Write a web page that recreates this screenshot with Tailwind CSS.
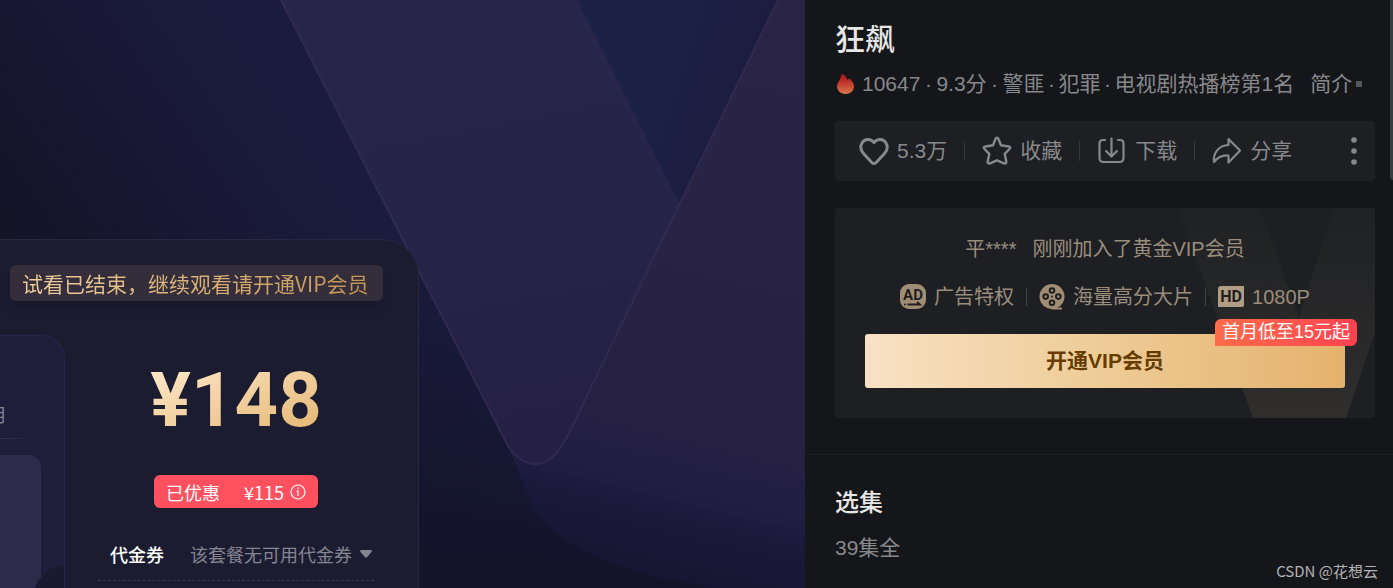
<!DOCTYPE html>
<html lang="zh-CN">
<head>
  <meta charset="UTF-8" />
  <meta name="viewport" content="width=device-width, initial-scale=1.0" />
  <title>狂飙</title>
  <script src="https://cdn.jsdelivr.net/npm/@tailwindcss/browser@4"></script>
</head>
<body class="bg-[#15161a] font-['Liberation_Sans','Noto_Sans_CJK_SC',sans-serif]">
  <div class="relative flex min-h-screen overflow-hidden">

    <!-- player area -->
    <main class="relative flex flex-1 flex-col overflow-hidden bg-[#17183a] font-['Noto_Sans_CJK_SC',sans-serif]">
      <svg class="absolute inset-0 h-full w-full" viewBox="0 0 805 588" preserveAspectRatio="xMaxYMin slice" aria-hidden="true">
        <defs>
          <linearGradient id="base" gradientUnits="userSpaceOnUse" x1="0" y1="240" x2="260" y2="60">
            <stop offset="0" stop-color="#131425" />
            <stop offset=".45" stop-color="#171733" />
            <stop offset="1" stop-color="#1b1b3d" />
          </linearGradient>
          <linearGradient id="low" x1="0" y1="0" x2="0" y2="1">
            <stop offset=".4" stop-color="#131530" stop-opacity="0" />
            <stop offset="1" stop-color="#131429" />
          </linearGradient>
          <linearGradient id="arm" x1="0" y1="0" x2=".2" y2="1">
            <stop offset="0" stop-color="#29254a" />
            <stop offset=".6" stop-color="#252448" />
            <stop offset="1" stop-color="#251f43" />
          </linearGradient>
          <linearGradient id="notch" x1="0" y1="0" x2="1" y2=".35">
            <stop offset=".45" stop-color="#1c2147" />
            <stop offset="1" stop-color="#1c1b3d" />
          </linearGradient>
          <linearGradient id="side" gradientUnits="userSpaceOnUse" x1="770" y1="30" x2="640" y2="570">
            <stop offset="0" stop-color="#2a2445" />
            <stop offset=".75" stop-color="#262043" />
            <stop offset=".84" stop-color="#211e43" />
            <stop offset=".9" stop-color="#1b193a" />
            <stop offset="1" stop-color="#161632" />
          </linearGradient>
        </defs>
        <rect width="805" height="588" fill="url(#base)" />
        <rect width="805" height="588" fill="url(#low)" />
        <path d="M778 0H805V588H720C620 575 560 550 530 500L508 446Z" fill="url(#side)" />
        <path d="M281 0H778L570 431Q554 464 536 464Q520 464 508 446Z" fill="url(#arm)" />
        <path d="M577 0H778L680 205Z" fill="url(#notch)" />
        <path d="M281 0L508 446Q520 464 536 464Q554 464 570 431L778 0" fill="none" stroke="#302a4f" stroke-width="2" />
      </svg>

      <section class="relative mt-[239px] flex w-[419px] flex-1 flex-col rounded-tr-[36px] border-t border-r border-[#27273f] bg-[#1c1c31]">
        <p class="mt-[25px] ml-[10px] w-[373px] rounded-md bg-[#342e3c] text-[21px] leading-9 shadow-lg">
          <span class="block bg-linear-to-r from-[#f3d3a0] to-[#c3924f] bg-clip-text pl-3 whitespace-nowrap text-transparent">试看已结束，继续观看请开通VIP会员</span>
        </p>

        <div class="mt-[34px] flex flex-1">
          <div class="relative flex w-[65px] flex-col overflow-hidden rounded-tr-3xl border-t border-r border-[#25254a] bg-[#1e1e3b]">
            <p class="mt-16 flex justify-end pr-[57px] text-lg leading-7 text-[#83839a]">月</p>
            <div class="mt-2.5 h-px w-8 bg-linear-to-r from-[#3c3040] to-transparent"></div>
            <div class="mt-4 w-[41px] flex-1 rounded-tr-xl bg-[#2d2c4a]"></div>
            <div class="absolute -right-10 -bottom-[49px] size-18 rounded-full bg-[#191930]"></div>
          </div>

          <div class="flex flex-1 flex-col items-center pr-11 pl-[33px]">
            <p class="mt-[29px] bg-linear-to-br from-[#ffe9cc] to-[#e3b56f] bg-clip-text font-['Roboto',sans-serif] text-[76px] leading-[72px] font-bold text-transparent">¥148</p>
            <div class="mt-[39px] flex h-[33px] items-center rounded-md bg-[#ff5060] px-3 text-lg leading-7 text-white">
              <span>已优惠</span>
              <span class="ml-6">¥115</span>
              <svg class="ml-1.5 size-4" viewBox="0 0 16 16" fill="none" stroke="currentColor" stroke-width="1.2">
                <circle cx="8" cy="8" r="7" />
                <path d="M8 12V6M6.500 7H8M8 3.500V5" />
              </svg>
            </div>
            <div class="mt-8 flex w-full items-center border-b border-dashed border-[#38384d] pb-3 pl-3 text-lg leading-7">
              <label for="voucher" class="font-medium text-white">代金券</label>
              <select id="voucher" class="ml-[26px] appearance-none text-[#858592]">
                <option>该套餐无可用代金券</option>
              </select>
              <svg class="ml-2 h-2 w-3" viewBox="0 0 12 8" fill="#858592"><path d="M1 0H11Q12.500 .5 11.500 2L7 7.300Q6 8 5 7.300L.5 2Q-.5 .5 1 0Z" /></svg>
            </div>
          </div>
        </div>
      </section>
    </main>

    <!-- info sidebar -->
    <aside class="w-[588px] shrink-0 bg-[#15161a] text-[21px] leading-7 text-[#87888b]">
      <div class="pt-5 pr-[18px] pl-[30px]">
        <h1 class="text-3xl leading-10 font-medium text-[#e6e6e6]">狂飙</h1>

        <div class="mt-2.5 flex items-center whitespace-nowrap">
          <svg class="mr-2 ml-0.5 h-5 w-[17px]" viewBox="0 0 17 20">
            <defs>
              <linearGradient id="fire" x1="0" y1="0" x2="0" y2="1">
                <stop offset=".2" stop-color="#b51f22" />
                <stop offset="1" stop-color="#d9774a" />
              </linearGradient>
            </defs>
            <path d="M4.500 0C7.500 .8 9.800 3 10.500 6C11.200 5.500 11.600 5 12 4.200C15 6.500 17 9 17 12.500C17 17 13 20 8.500 20S0 17 0 12.500C0 8 4.500 5 4.500 0Z" fill="url(#fire)" />
          </svg>
          <span>10647</span><span class="w-4 text-center">·</span>
          <span>9.3分</span><span class="w-4 text-center">·</span>
          <span>警匪</span><span class="w-3.5 text-center">·</span>
          <span>犯罪</span><span class="w-3.5 text-center">·</span>
          <span>电视剧热播榜第1名</span>
          <a href="#" class="ml-4 flex items-center gap-1">简介<i class="size-1.5 bg-[#55565a]"></i></a>
        </div>

        <div class="mt-[23px] flex h-[60px] items-center gap-[17px] rounded-sm bg-[#1e1f23] pr-4 pl-6">
          <button class="flex items-center gap-2">
            <svg class="size-[30px]" viewBox="0 0 30 30" fill="none" stroke="currentColor" stroke-width="3" stroke-linejoin="round">
              <path d="M15 6.500C11.500 2.200 5.500 2.800 3 7C.8 11 1.800 14.500 4.500 17.500L12.800 26.500Q15 28.700 17.200 26.500L25.500 17.500C28.200 14.500 29.200 11 27 7C24.500 2.800 18.500 2.200 15 6.500Z" />
            </svg>
            5.3万
          </button>
          <span class="h-5 w-px bg-[#37383c]"></span>
          <button class="flex items-center gap-2">
            <svg class="size-[30px]" viewBox="0 0 30 30" fill="none" stroke="currentColor" stroke-width="2.400" stroke-linejoin="round">
              <path d="M15 1.800Q16 1.800 16.500 3L19 9.300L26.700 10.500Q29.300 11.200 27.500 13L22.700 17.800L24.300 25.600Q24.500 28.200 22 27.300L15 24.300L8 27.300Q5.500 28.200 5.700 25.600L7.300 17.800L2.500 13Q.7 11.200 3.300 10.500L11 9.300L13.500 3Q14 1.800 15 1.800Z" />
            </svg>
            收藏
          </button>
          <span class="h-5 w-px bg-[#37383c]"></span>
          <button class="flex items-center gap-2">
            <svg class="size-[30px]" viewBox="0 0 30 30" fill="none" stroke="currentColor" stroke-width="2.200" stroke-linecap="round" stroke-linejoin="round">
              <path d="M8 4H6Q2.500 4 2.500 7.500V22Q2.500 26 6.500 26H22.500Q26.500 26 26.500 22V7.500Q26.500 4 23 4H21M14.500 2.500V20M9 15L14.500 20.500L20 15" />
            </svg>
            下载
          </button>
          <span class="h-5 w-px bg-[#37383c]"></span>
          <button class="flex items-center gap-2">
            <svg class="size-[30px]" viewBox="0 0 30 30" fill="none" stroke="currentColor" stroke-width="2.200" stroke-linejoin="round">
              <path d="M16.500 3L28 14.500L16.500 26.500V19.500C10 19 5.500 21.500 2 26C1 16.500 7 9.500 16.500 9Z" />
            </svg>
            分享
          </button>
          <button class="ml-auto" aria-label="更多">
            <svg class="h-7 w-2.5" viewBox="0 0 10 28" fill="currentColor">
              <circle cx="5" cy="3" r="2.800" /><circle cx="5" cy="14" r="2.800" /><circle cx="5" cy="25" r="2.800" />
            </svg>
          </button>
        </div>

        <section class="relative mt-[27px] rounded-sm bg-[#1e1f23] px-[30px] pt-[27px] pb-[30px]">
          <svg class="absolute top-0 right-0 h-full w-[197px]" viewBox="343 0 197 210" aria-hidden="true">
            <defs>
              <linearGradient id="vee" x1="0" y1="0" x2="0" y2="1">
                <stop offset="0" stop-color="#202124" />
                <stop offset="1" stop-color="#2f2e2d" />
              </linearGradient>
            </defs>
            <path d="M343 0H425L464 109L499 0H540V124L511 210H418Z" fill="url(#vee)" />
          </svg>

          <div class="relative">
            <p class="flex justify-center gap-4 text-xl leading-7 text-[#9a8d7c]"><span>平****</span><span>刚刚加入了黄金VIP会员</span></p>

            <ul class="mt-5 flex items-center justify-center gap-3 text-xl leading-7 whitespace-nowrap text-[#9a8d7c]">
              <li class="flex items-center gap-2">
                <svg class="size-[26px]" viewBox="0 0 26 26">
                  <rect x="0" y="0" width="26" height="25" rx="9" fill="#a08d74" />
                  <text x="13" y="16" text-anchor="middle" font-family="Roboto" font-size="15" font-weight="700" fill="#1e1f23">AD</text>
                  <path d="M7.500 20.500H20L17 18" fill="none" stroke="#1e1f23" stroke-width="1.800" />
                  <circle cx="5" cy="20.500" r="1" fill="#1e1f23" />
                </svg>
                广告特权
              </li>
              <li class="h-[18px] w-px bg-[#45423f]"></li>
              <li class="flex items-center gap-2">
                <svg class="size-[26px]" viewBox="0 0 26 26">
                  <circle cx="13" cy="12.500" r="12.500" fill="#a08d74" />
                  <path d="M13 23.500H23V25.500H13Z" fill="#a08d74" />
                  <g fill="none" stroke="#1e1f23" stroke-width="2">
                    <circle cx="13" cy="6.500" r="2.300" /><circle cx="13" cy="18.800" r="2.300" />
                    <circle cx="6.700" cy="12.600" r="2.300" /><circle cx="19.300" cy="12.600" r="2.300" />
                  </g>
                  <circle cx="13" cy="12.600" r="1" fill="#1e1f23" />
                </svg>
                海量高分大片
              </li>
              <li class="h-[18px] w-px bg-[#45423f]"></li>
              <li class="flex items-center gap-2">
                <svg class="size-[26px]" viewBox="0 0 26 26">
                  <path d="M3 2H26V21Q26 23 24 23H0V5Q0 2 3 2Z" fill="#b09d83" />
                  <text x="13" y="18" text-anchor="middle" font-family="Roboto" font-size="16" font-weight="700" fill="#1e1f23">HD</text>
                </svg>
                1080P
              </li>
            </ul>

            <button class="mt-[23px] h-[54px] w-full rounded-[3px] bg-linear-to-r from-[#f8e2c4] via-[#eecb96] to-[#e4b26c] font-bold text-[#663c00]">开通VIP会员</button>
            <span class="absolute -right-3 bottom-[42px] h-[27px] rounded-md rounded-bl-none bg-linear-to-r from-[#ff6c49] to-[#ff4050] px-[7px] text-lg leading-[26px] text-white">首月低至15元起</span>
          </div>
        </section>
      </div>

      <section class="mt-9 border-t border-[#1f2024] pt-8 pl-[30px]">
        <h2 class="text-2xl leading-8 font-medium text-[#e6e6e6]">选集</h2>
        <p class="mt-[15px]">39集全</p>
      </section>
    </aside>

    <div class="absolute top-0 right-0 h-[180px] w-[3px] rounded-bl-sm bg-[#3b3c40]"></div>
    <p class="absolute right-[15px] bottom-1.5 font-['Noto_Sans_CJK_SC',sans-serif] text-[15px] leading-[22px] text-[#b4b4b6]">CSDN @花想云</p>
  </div>
</body>
</html>
